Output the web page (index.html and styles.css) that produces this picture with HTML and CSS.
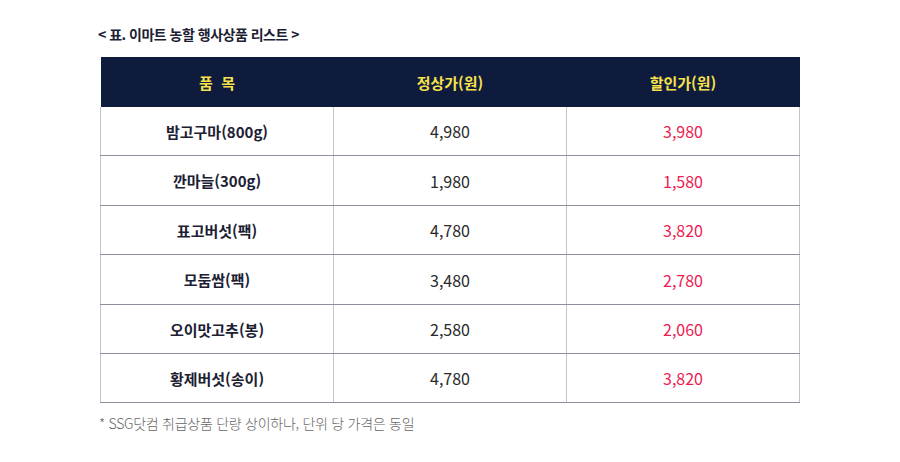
FILE: index.html
```html
<!DOCTYPE html>
<html lang="ko">
<head>
<meta charset="utf-8">
<link rel="stylesheet" href="styles.css">
</head>
<body>
<div class="wrap">
  <div class="title">&lt; 표. 이마트 농할 행사상품 리스트 &gt;</div>
  <table class="list">
    <thead>
      <tr><th>품&nbsp;&nbsp;목</th><th>정상가(원)</th><th>할인가(원)</th></tr>
    </thead>
    <tbody>
      <tr><td class="name">밤고구마(800g)</td><td>4,980</td><td class="sale">3,980</td></tr>
      <tr><td class="name">깐마늘(300g)</td><td>1,980</td><td class="sale">1,580</td></tr>
      <tr><td class="name">표고버섯(팩)</td><td>4,780</td><td class="sale">3,820</td></tr>
      <tr><td class="name">모둠쌈(팩)</td><td>3,480</td><td class="sale">2,780</td></tr>
      <tr><td class="name">오이맛고추(봉)</td><td>2,580</td><td class="sale">2,060</td></tr>
      <tr><td class="name">황제버섯(송이)</td><td>4,780</td><td class="sale">3,820</td></tr>
    </tbody>
  </table>
  <div class="note">* SSG닷컴 취급상품 단량 상이하나, 단위 당 가격은 동일</div>
</div>
</body>
</html>
```
FILE: styles.css
```css
html, body { margin: 0; padding: 0; background: #fff; }
body { font-family: "Noto Sans CJK KR", "Noto Sans", sans-serif; }
.wrap { padding: 24px 0 0 100px; width: 700px; }
.title { font-size: 14px; font-weight: 700; color: #1c2033; line-height: 20px; margin-left: -2px; letter-spacing: -0.5px; }
.list { margin-top: 13px; width: 700px; border-collapse: collapse; table-layout: fixed; }
.list th { background: #0f1b3d; color: #f7e14c; font-size: 15px; font-weight: 700; height: 50px; padding: 0; text-align: center; }
.list td { height: 48px; padding: 0; text-align: center; font-size: 16px; color: #2a2a2a; border-left: 1px solid #c4c4cf; border-right: 1px solid #c4c4cf; border-bottom: 1px solid #8b909c; }
.list tbody tr:nth-child(2) td, .list tbody tr:nth-child(4) td { height: 49px; }
.list td.name { font-weight: 700; color: #1c2033; font-size: 15px; }
.list td.sale { color: #ee1c50; }
.note { margin-top: 10px; font-size: 14px; color: #666; font-weight: 300; letter-spacing: -0.27px; margin-left: -1px; }
```
